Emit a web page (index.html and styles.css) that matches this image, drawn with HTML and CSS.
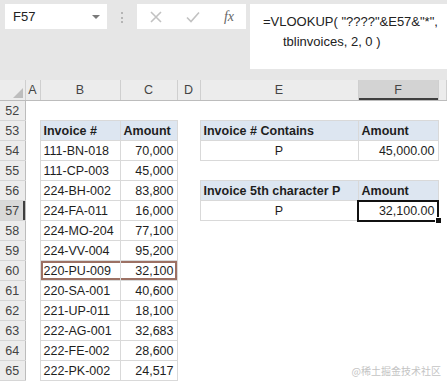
FILE: index.html
```html
<!DOCTYPE html>
<html lang="en">
<head>
    <meta charset="UTF-8">
    <title>Invoice lookup</title>
    <link rel="stylesheet" href="styles.css">
</head>
<body>
    <!-- Formula bar -->
    <div class="toolbar">
        <div class="name-box">F57 <span class="arrow"></span></div>
        <div class="splitter"></div>
        <div class="fx-box">
            <svg width="12" height="12" viewBox="0 0 12 12"><path d="M1 1 L11 11 M11 1 L1 11" stroke="#c2c2c2" stroke-width="1.6" fill="none"/></svg>
            <svg width="14" height="12" viewBox="0 0 14 12"><path d="M1 6.5 L5 10.5 L13 1.5" stroke="#c2c2c2" stroke-width="1.6" fill="none"/></svg>
            <span class="fx">fx</span>
        </div>
        <div class="formula">
            <div>=VLOOKUP( "????"&amp;E57&amp;"*",</div>
            <div class="indent">tblinvoices, 2, 0 )</div>
        </div>
    </div>

    <!-- Sheet -->
    <table class="sheet">
        <colgroup>
            <col class="w-rh"><col class="w-a"><col class="w-b"><col class="w-c">
            <col class="w-d"><col class="w-e"><col class="w-f"><col>
        </colgroup>
        <tr class="col-heads">
            <th class="corner"><span class="tri"></span></th>
            <th>A</th><th>B</th><th>C</th><th>D</th><th>E</th><th class="sel">F</th><th></th>
        </tr>
        <tr><td class="rh">52</td><td></td><td></td><td></td><td></td><td></td><td></td><td></td></tr>
        <tr><td class="rh">53</td><td></td><td class="t hd">Invoice #</td><td class="t hd">Amount</td><td></td><td class="t hd">Invoice # Contains</td><td class="t hd">Amount</td><td></td></tr>
        <tr><td class="rh">54</td><td></td><td class="t">111-BN-018</td><td class="t num">70,000</td><td></td><td class="t mid">P</td><td class="t num">45,000.00</td><td></td></tr>
        <tr><td class="rh">55</td><td></td><td class="t">111-CP-003</td><td class="t num">45,000</td><td></td><td></td><td></td><td></td></tr>
        <tr><td class="rh">56</td><td></td><td class="t">224-BH-002</td><td class="t num">83,800</td><td></td><td class="t hd">Invoice 5th character P</td><td class="t hd">Amount</td><td></td></tr>
        <tr><td class="rh sel">57</td><td></td><td class="t">224-FA-011</td><td class="t num">16,000</td><td></td><td class="t mid">P</td><td class="t num active">32,100.00<span class="handle"></span></td><td></td></tr>
        <tr><td class="rh">58</td><td></td><td class="t">224-MO-204</td><td class="t num">77,100</td><td></td><td></td><td></td><td></td></tr>
        <tr><td class="rh">59</td><td></td><td class="t">224-VV-004</td><td class="t num">95,200</td><td></td><td></td><td></td><td></td></tr>
        <tr><td class="rh">60</td><td></td><td class="t mark-l">220-PU-009</td><td class="t num mark-r">32,100</td><td></td><td></td><td></td><td></td></tr>
        <tr><td class="rh">61</td><td></td><td class="t">220-SA-001</td><td class="t num">40,600</td><td></td><td></td><td></td><td></td></tr>
        <tr><td class="rh">62</td><td></td><td class="t">221-UP-011</td><td class="t num">18,100</td><td></td><td></td><td></td><td></td></tr>
        <tr><td class="rh">63</td><td></td><td class="t">222-AG-001</td><td class="t num">32,683</td><td></td><td></td><td></td><td></td></tr>
        <tr><td class="rh">64</td><td></td><td class="t">222-FE-002</td><td class="t num">28,600</td><td></td><td></td><td></td><td></td></tr>
        <tr><td class="rh">65</td><td></td><td class="t">222-PK-002</td><td class="t num">24,517</td><td></td><td></td><td></td><td></td></tr>
    </table>

    <div class="watermark">@稀土掘金技术社区</div>
</body>
</html>
```

FILE: styles.css
```css
body {
    margin: 0;
    width: 447px;
    height: 382px;
    overflow: hidden;
    position: relative;
    background-color: #fff;
    font-family: "Liberation Sans", Arial, sans-serif;
    color: #1e1e1e;
}
.toolbar {
    height: 80px;
    box-sizing: border-box;
    padding-top: 4px;
    background-color: #e6e6e6;
    display: flex;
    align-items: flex-start;
}
.name-box {
    margin-left: 5px;
    width: 102px;
    height: 25px;
    box-sizing: border-box;
    padding: 0 7px 0 8px;
    background-color: #fff;
    display: flex;
    align-items: center;
    justify-content: space-between;
    font-size: 13px;
    color: #222;
}
.arrow {
    width: 0;
    height: 0;
    border-left: 4px solid transparent;
    border-right: 4px solid transparent;
    border-top: 4px solid #7a7a7a;
}
.splitter {
    height: 11px;
    margin: 8px 14px 0 14px;
    border-left: 2px dotted #b5b5b5;
}
.fx-box {
    width: 109px;
    height: 25px;
    box-sizing: border-box;
    padding: 0 12px 0 13px;
    background-color: #fff;
    display: flex;
    align-items: center;
    justify-content: space-between;
}
.fx {
    font-family: "Liberation Serif", serif;
    font-style: italic;
    font-size: 14px;
    color: #666;
}
.formula {
    flex: 1;
    margin-left: 4px;
    height: 65px;
    box-sizing: border-box;
    padding: 8px 0 0 13px;
    background-color: #fff;
    font-size: 13px;
    line-height: 20px;
    color: #222;
    white-space: nowrap;
}
.formula .indent {
    padding-left: 20px;
}

/* sheet grid */
.sheet {
    width: 447px;
    border-collapse: collapse;
    table-layout: fixed;
}
.w-rh { width: 25px; }
.w-a { width: 15px; }
.w-b { width: 80px; }
.w-c { width: 57px; }
.w-d { width: 23px; }
.w-e { width: 158px; }
.w-f { width: 80px; }
.sheet th {
    height: 18px;
    padding: 0;
    background-color: #ececec;
    border-right: 1px solid #cfcfcf;
    border-bottom: 1px solid #bcbcbc;
    font-weight: normal;
    font-size: 12.5px;
    line-height: 14px;
    color: #444;
}
.sheet th.sel {
    background-color: #d3d3d3;
    box-shadow: inset 0 -2px 0 #3f3f3f;
}
.sheet th.corner {
    vertical-align: bottom;
    padding: 0 2px 2px 0;
}
.tri {
    display: block;
    margin-left: auto;
    width: 0;
    height: 0;
    border-left: 10px solid transparent;
    border-bottom: 10px solid #bdbdbd;
}
.sheet td {
    height: 19px;
    padding: 0 3px;
    font-size: 12.5px;
    line-height: 14px;
    white-space: nowrap;
    overflow: hidden;
}
.sheet td.rh {
    padding: 0;
    text-align: center;
    background-color: #ececec;
    border-right: 1px solid #bcbcbc;
    border-bottom: 1px solid #d6d6d6;
    color: #444;
}
.sheet td.rh.sel {
    background-color: #d9d9d9;
    box-shadow: inset -2px 0 0 #3f3f3f;
}
.sheet td.t {
    border: 1px solid #d9d9d9;
}
.sheet td.hd {
    background-color: #dde6f1;
    font-weight: bold;
}
.num {
    text-align: right;
}
.mid {
    text-align: center;
}
.sheet td.mark-l {
    box-shadow: inset 2px 0 0 #9c7164, inset 0 2px 0 #9c7164, inset 0 -2px 0 #9c7164;
}
.sheet td.mark-r {
    box-shadow: inset -2px 0 0 #9c7164, inset 0 2px 0 #9c7164, inset 0 -2px 0 #9c7164;
}
.sheet td.active {
    position: relative;
    overflow: visible;
    outline: 2px solid #111;
    outline-offset: -1px;
}
.handle {
    position: absolute;
    right: -4px;
    bottom: -4px;
    width: 5px;
    height: 5px;
    background-color: #111;
    border: 1px solid #fff;
}
.watermark {
    position: absolute;
    right: 6px;
    bottom: 4px;
    font-family: "Noto Sans CJK SC", sans-serif;
    font-size: 10px;
    color: #c4c4c4;
}
```
